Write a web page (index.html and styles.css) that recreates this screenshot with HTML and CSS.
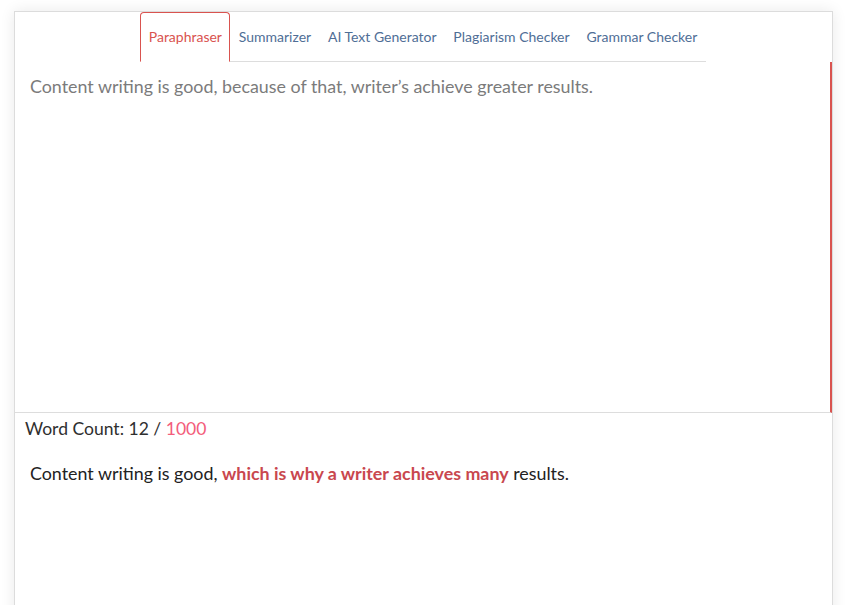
FILE: index.html
```html
<!DOCTYPE html>
<html lang="en">
<head>
<meta charset="utf-8">
<title>Paraphraser</title>
<link rel="stylesheet" href="styles.css">
</head>
<body>
<div class="card">
  <div class="nav-wrap">
    <ul class="tabs">
      <li class="tab active">Paraphraser</li>
      <li class="tab">Summarizer</li>
      <li class="tab">AI Text Generator</li>
      <li class="tab">Plagiarism Checker</li>
      <li class="tab">Grammar Checker</li>
    </ul>
  </div>
  <div class="input-area">Content writing is good, because of that, writer’s achieve greater results.</div>
  <div class="word-count">Word Count: 12 / <span class="limit">1000</span></div>
  <div class="output">Content writing is good, <strong class="changed">which is why a writer achieves many</strong> results.</div>
</div>
</body>
</html>
```
FILE: styles.css
```css
html, body {
  margin: 0;
  padding: 0;
  background: #ffffff;
  font-family: Lato, "Open Sans", Arial, sans-serif;
}
body {
  padding: 11px 0 0 14px;
  overflow: hidden;
  height: 605px;
  box-sizing: border-box;
}
.card {
  width: 819px;
  box-sizing: border-box;
  border: 1px solid #dcdcdc;
  background: #fff;
  box-shadow: 0 0 14px rgba(0, 0, 0, 0.09);
  min-height: 700px;
}
.nav-wrap {
  display: flex;
  justify-content: center;
  padding-right: 1px;
}
.tabs {
  display: flex;
  list-style: none;
  margin: 0;
  padding: 0;
  border-bottom: 1px solid #dddddd;
}
.tab {
  font-size: 14px;
  line-height: 20px;
  padding: 14px 7.4px;
  border: 1px solid transparent;
  border-radius: 4px 4px 0 0;
  margin-bottom: -1px;
  color: #4f6e96;
  white-space: nowrap;
}
.tab.active {
  color: #d9534f;
  border-color: #d9534f #d9534f transparent #d9534f;
  background: #fff;
}
.input-area {
  height: 351px;
  box-sizing: border-box;
  padding: 11px 15px;
  font-size: 17.85px;
  line-height: 27px;
  color: #7b7b7b;
  border-right: 2px solid #d9534f;
  border-bottom: 1px solid #dddddd;
}
.word-count {
  font-size: 17.55px;
  line-height: 27px;
  padding: 2px 10px 0;
  color: #2f2f2f;
}
.limit {
  color: #f35d7b;
}
.output {
  padding: 18px 15px;
  font-size: 17.85px;
  line-height: 27px;
  color: #222;
}
.changed {
  color: #c9474e;
  font-weight: 700;
}
```
